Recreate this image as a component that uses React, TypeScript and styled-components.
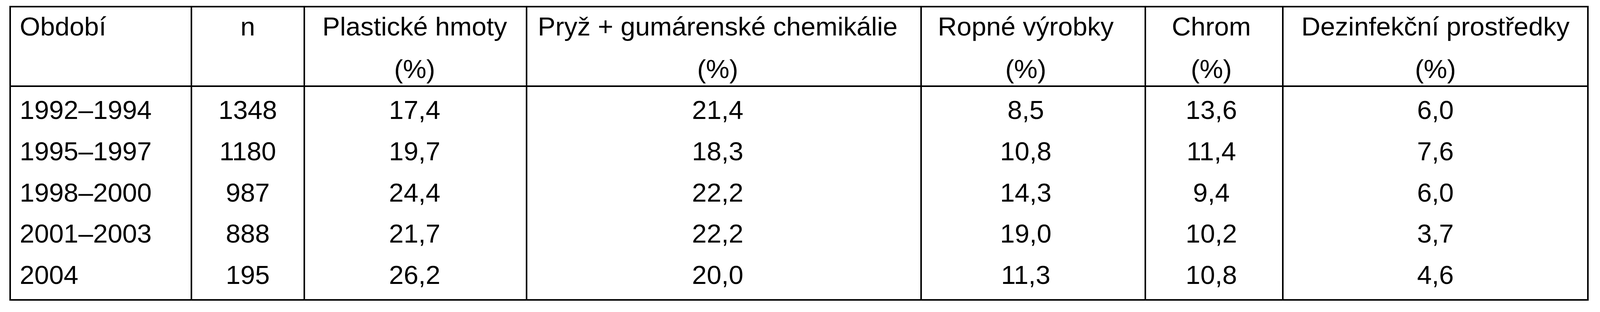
import React from "react";
import styled, { createGlobalStyle } from "styled-components";

const GlobalStyle = createGlobalStyle`
  html, body {
    margin: 0;
    padding: 0;
    background: #ffffff;
  }
  body {
    font-family: "Liberation Sans", Arial, Helvetica, sans-serif;
    color: #000000;
  }
`;

const Page = styled.div`
  padding: 15px 29px 0 24px;
`;

/* column proportions measured on the 4248px-wide reference */
const COLS = [477, 300, 591, 1048, 595, 366, 810];

const Grid = styled.div`
  box-sizing: border-box;
  width: 100%;
  display: grid;
  grid-template-columns: ${COLS.map((c) => `minmax(0, ${c}fr)`).join(" ")};
  border: 4px solid #000;
  font-size: 67.5px;
  color: #000;
`;

type CellProps = { $index: number; $left?: boolean; $shift?: number };

const HeaderCell = styled.div<CellProps>`
  box-sizing: border-box;
  height: 204px;
  display: flex;
  flex-direction: column;
  align-items: ${(p) => (p.$left ? "flex-start" : "center")};
  gap: 33px;
  padding: 11px ${(p) => p.$shift ?? 0}px 0 ${(p) => (p.$left ? 22.5 : 0)}px;
  border-left: ${(p) => (p.$index > 0 ? "4px solid #000" : "none")};
  border-bottom: 4px solid #000;
  line-height: 76px;
  white-space: nowrap;
`;

const HeaderLine = styled.span`
  display: block;
  height: 76px;
`;

type DataProps = CellProps & { $first: boolean; $last: boolean };

const DataCell = styled.div<DataProps>`
  box-sizing: border-box;
  line-height: 105.75px;
  padding-top: ${(p) => (p.$first ? 6 : 0)}px;
  padding-bottom: ${(p) => (p.$last ? 9.25 : 0)}px;
  padding-left: ${(p) => (p.$left ? 22.5 : 0)}px;
  padding-right: ${(p) => p.$shift ?? 0}px;
  text-align: ${(p) => (p.$left ? "left" : "center")};
  border-left: ${(p) => (p.$index > 0 ? "4px solid #000" : "none")};
  white-space: nowrap;
`;

type Column = { title: string; unit: boolean; left?: boolean; shift: number };

const columns: Column[] = [
  { title: "Období", unit: false, left: true, shift: 0 },
  { title: "n", unit: false, shift: 0 },
  { title: "Plastické hmoty", unit: true, shift: 4 },
  { title: "Pryž + gumárenské chemikálie", unit: true, shift: 32 },
  { title: "Ropné výrobky", unit: true, shift: 38 },
  { title: "Chrom", unit: true, shift: 14 },
  { title: "Dezinfekční prostředky", unit: true, shift: 0 },
];

const rows: string[][] = [
  ["1992–1994", "1348", "17,4", "21,4", "8,5", "13,6", "6,0"],
  ["1995–1997", "1180", "19,7", "18,3", "10,8", "11,4", "7,6"],
  ["1998–2000", "987", "24,4", "22,2", "14,3", "9,4", "6,0"],
  ["2001–2003", "888", "21,7", "22,2", "19,0", "10,2", "3,7"],
  ["2004", "195", "26,2", "20,0", "11,3", "10,8", "4,6"],
];

export default function App() {
  return (
    <>
      <GlobalStyle />
      <Page>
        <Grid>
          {columns.map((c, i) => (
            <HeaderCell key={c.title} $index={i} $left={c.left} $shift={c.shift}>
              <HeaderLine>{c.title}</HeaderLine>
              {c.unit && <HeaderLine>(%)</HeaderLine>}
            </HeaderCell>
          ))}
          {rows.map((r, ri) =>
            r.map((v, ci) => (
              <DataCell
                key={`${ri}-${ci}`}
                $index={ci}
                $left={columns[ci].left}
                $shift={columns[ci].shift}
                $first={ri === 0}
                $last={ri === rows.length - 1}
              >
                {v}
              </DataCell>
            ))
          )}
        </Grid>
      </Page>
    </>
  );
}
